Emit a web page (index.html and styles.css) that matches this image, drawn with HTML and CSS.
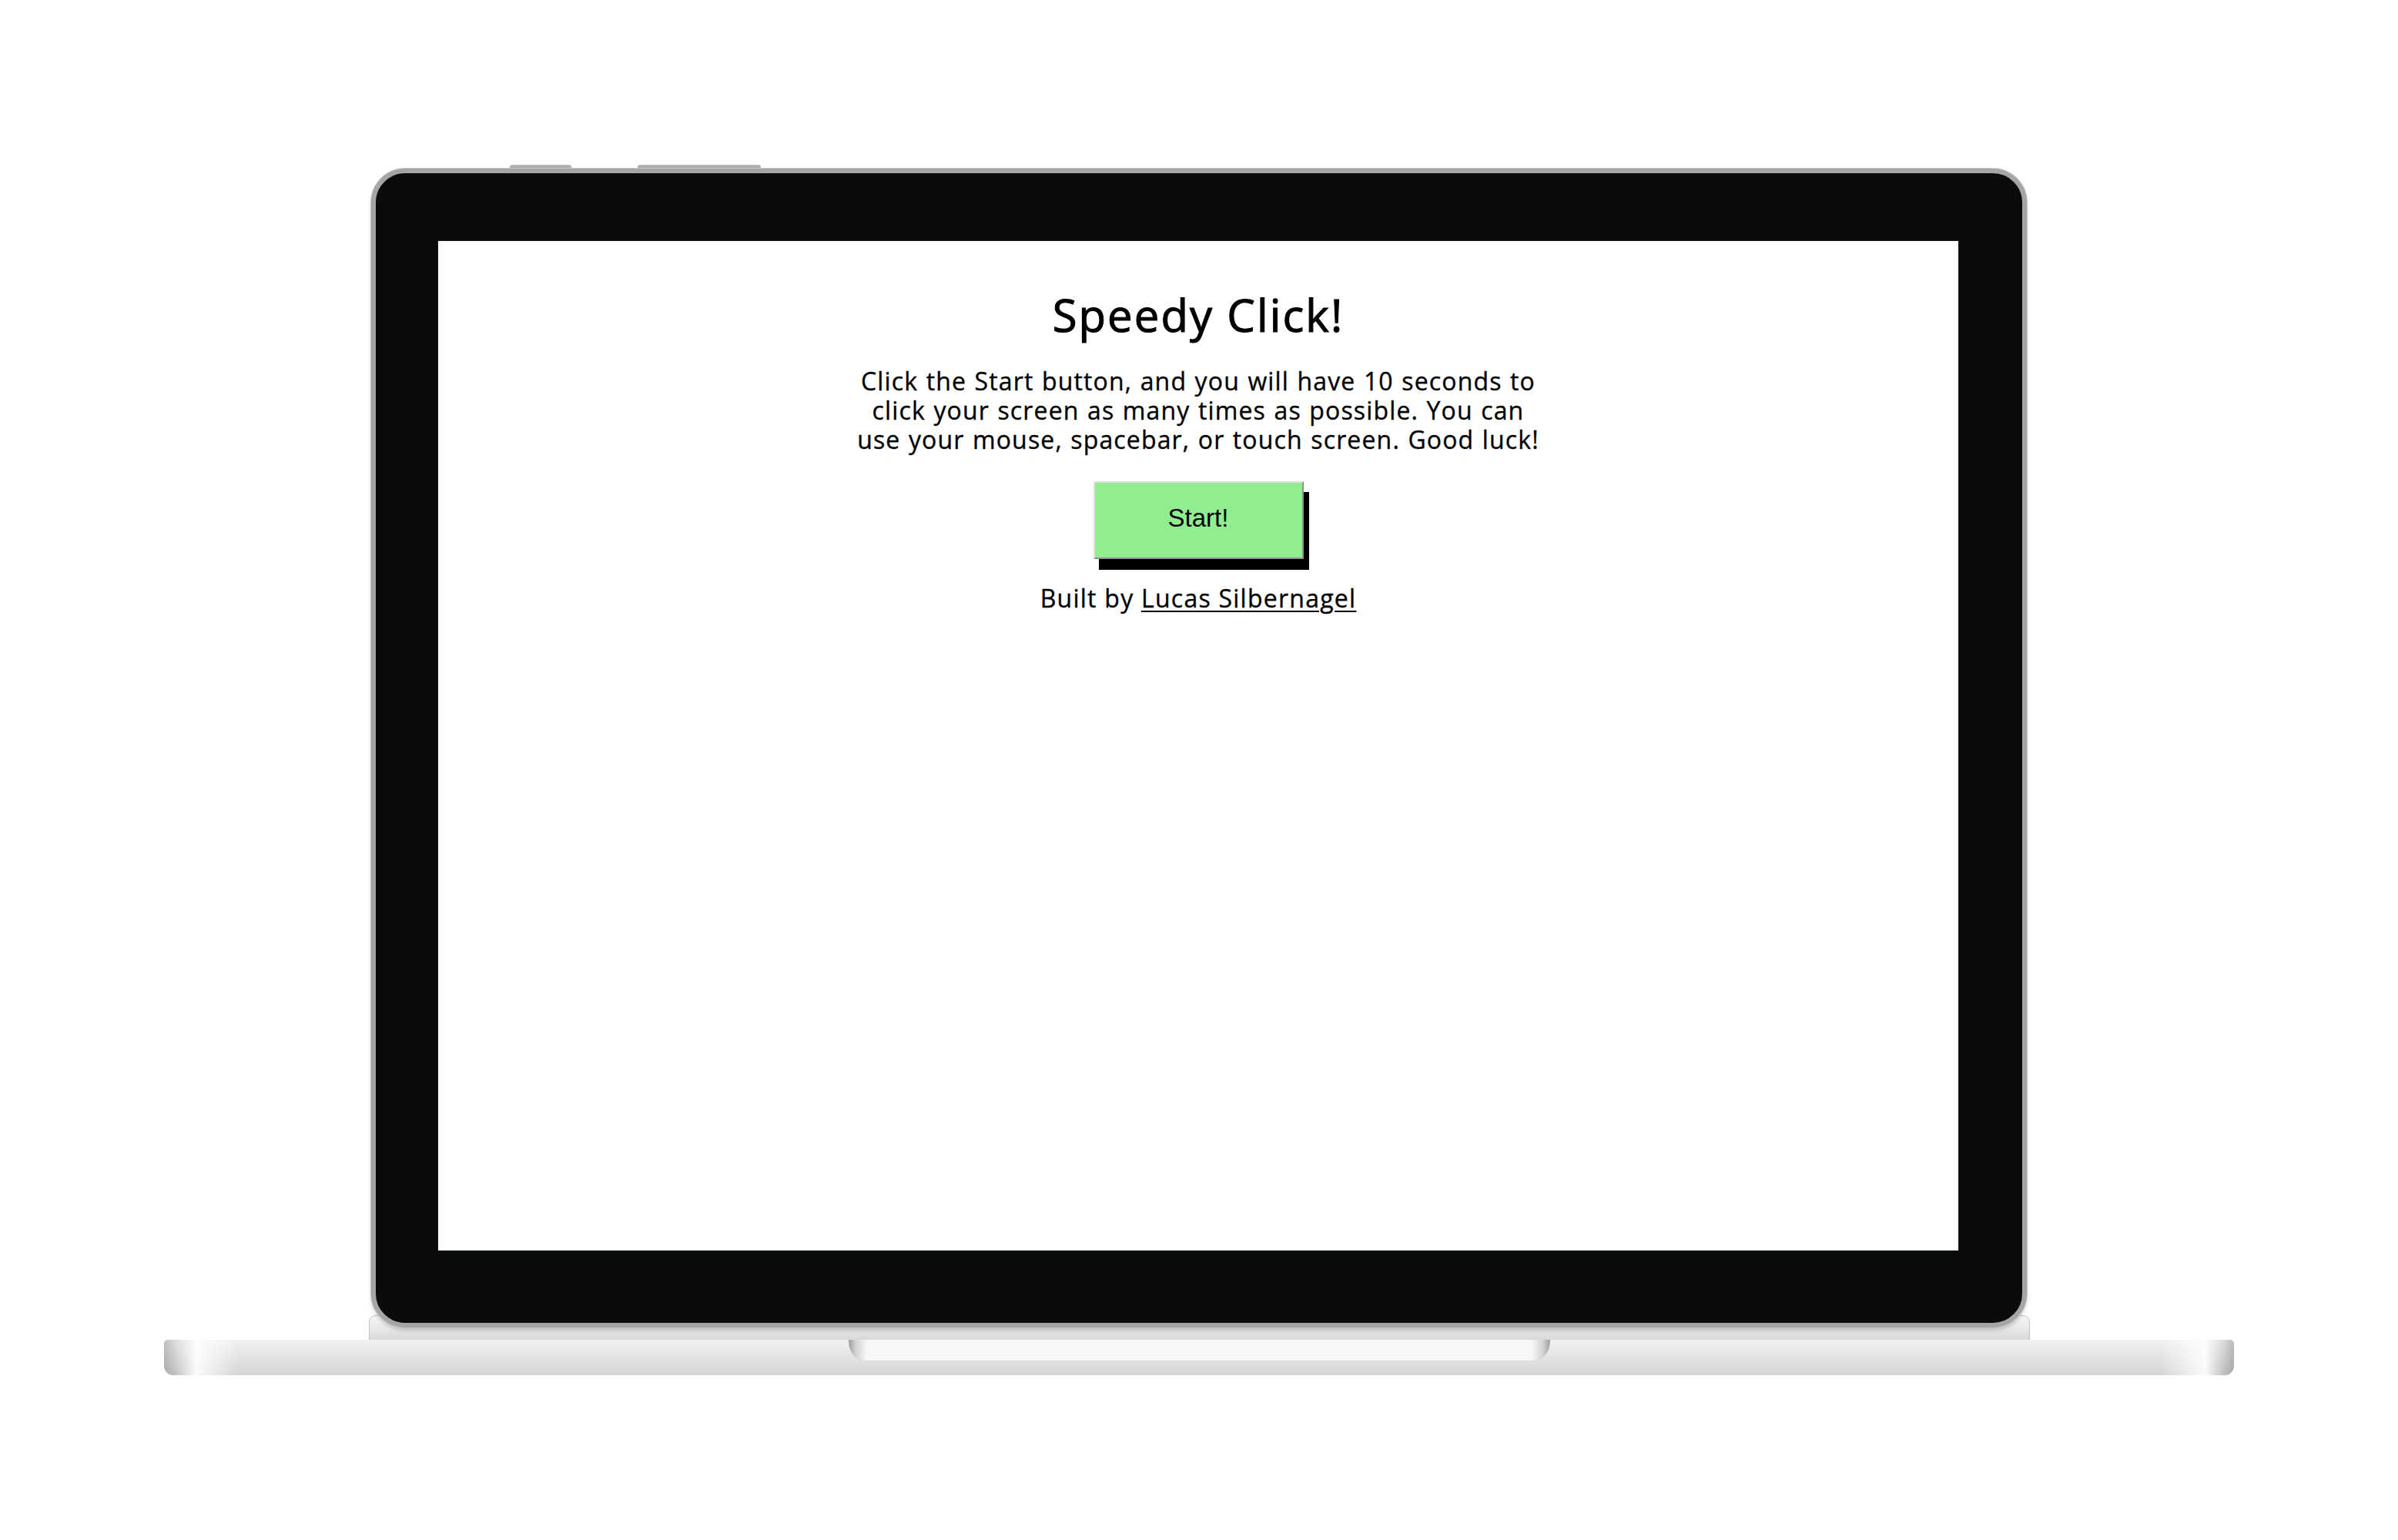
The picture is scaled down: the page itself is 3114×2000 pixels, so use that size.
FILE: index.html
```html
<!DOCTYPE html>
<html lang="en">
<head>
<meta charset="utf-8">
<title>Speedy Click!</title>
<link rel="stylesheet" href="styles.css">
</head>
<body>
<div class="scene">
  <div class="laptop">
    <div class="lid">
      <div class="lid-buttons">
        <span class="lid-btn lid-btn-a"></span>
        <span class="lid-btn lid-btn-b"></span>
      </div>
      <div class="bezel">
        <main class="screen">
          <h1 class="title">Speedy Click!</h1>
          <p class="intro">Click the Start button, and you will have 10 seconds to<br>click your screen as many times as possible. You can<br>use your mouse, spacebar, or touch screen. Good luck!</p>
          <button class="start-btn" type="button">Start!</button>
          <p class="credit">Built by <a class="credit-link" href="#">Lucas Silbernagel</a></p>
        </main>
      </div>
    </div>
    <div class="hinge"></div>
    <div class="base">
      <div class="trackpad-notch"></div>
    </div>
  </div>
</div>
</body>
</html>
```

FILE: styles.css
```css
html, body {
  margin: 0;
  padding: 0;
}

body {
  width: 3114px;
  height: 2000px;
  background: #ffffff;
  overflow: hidden;
  font-family: "Open Sans", "Liberation Sans", sans-serif;
  color: #000;
}

.scene {
  display: flex;
  justify-content: center;
  padding-top: 214px;
}

.laptop {
  display: flex;
  flex-direction: column;
  align-items: center;
}

.lid {
  width: 2150px;
  display: flex;
  flex-direction: column;
}

.lid-buttons {
  height: 5px;
  display: flex;
  gap: 86px;
  padding-left: 180px;
}

.lid-btn {
  display: block;
  height: 5px;
  background: linear-gradient(#b9b9b9, #a3a3a3);
  border-radius: 3px 3px 0 0;
}

.lid-btn-a { width: 80px; }
.lid-btn-b { width: 160px; }

.bezel {
  position: relative;
  z-index: 2;
  box-sizing: border-box;
  width: 2150px;
  padding: 88px 82px 94px 81px;
  background: #0a0c0b;
  border: 6px solid #a5a5a5;
  border-radius: 44px;
  box-shadow: 0 0 0 1px #c6c6c6, 0 4px 5px rgba(0, 0, 0, 0.18);
}

.screen {
  width: 1974px;
  height: 1311px;
  background: #ffffff;
  box-shadow: 0 0 0 1px #141b20;
  display: flex;
  flex-direction: column;
  align-items: center;
  box-sizing: border-box;
  padding-top: 64px;
}

.title {
  margin: 0;
  font-size: 58px;
  line-height: 64px;
  font-weight: 400;
  letter-spacing: 2.1px;
  -webkit-text-stroke: 1.1px #000;
}

.intro {
  margin: 35px 0 0;
  font-size: 32px;
  line-height: 38px;
  font-weight: 400;
  letter-spacing: 1.15px;
  word-spacing: 1px;
  text-align: center;
  white-space: nowrap;
  -webkit-text-stroke: 0.35px #000;
}

.start-btn {
  margin-top: 35px;
  box-sizing: border-box;
  width: 273px;
  height: 101px;
  padding: 0 0 6px;
  display: flex;
  align-items: center;
  justify-content: center;
  background: #90ee90;
  border-style: solid;
  border-width: 2px;
  border-color: #e2e2e2 #8f8f8f #8f8f8f #e2e2e2;
  box-shadow: 7px 14px 0 #000;
  font-family: "Liberation Sans", Arial, sans-serif;
  font-size: 33px;
  color: #000;
  cursor: pointer;
}

.credit {
  margin: 32px 0 0;
  font-size: 32px;
  line-height: 38px;
  font-weight: 400;
  letter-spacing: 1.25px;
  white-space: nowrap;
  -webkit-text-stroke: 0.35px #000;
}

.credit-link {
  color: #000;
  text-decoration: underline;
  text-decoration-thickness: 2px;
  text-underline-offset: 4px;
}

.hinge {
  position: relative;
  z-index: 1;
  box-sizing: border-box;
  width: 2157px;
  height: 32px;
  margin-top: -16px;
  background: linear-gradient(#f6f6f6, #e9e9e9 50%, #d9d9d9);
  border: 1px solid #c4c4c4;
  border-bottom: 0;
  border-radius: 9px 9px 0 0;
}

.base {
  width: 2688px;
  height: 46px;
  display: flex;
  justify-content: center;
  border-radius: 5px 5px 12px 12px;
  background:
    linear-gradient(to right,
      rgba(0, 0, 0, 0.2) 0,
      rgba(0, 0, 0, 0.07) 0.6%,
      rgba(255, 255, 255, 0.9) 1.55%,
      rgba(255, 255, 255, 0) 3.6%,
      rgba(255, 255, 255, 0) 96.4%,
      rgba(255, 255, 255, 0.9) 98.6%,
      rgba(0, 0, 0, 0.07) 99.4%,
      rgba(0, 0, 0, 0.22) 100%),
    linear-gradient(#f1f1f1, #e6e6e6 40%, #d4d4d4);
}

.trackpad-notch {
  width: 911px;
  height: 28px;
  border-radius: 0 0 22px 22px / 0 0 26px 26px;
  background:
    linear-gradient(to right,
      #9c9c9c 0,
      #d2d2d2 1%,
      #f7f7f7 2.6%,
      #f7f7f7 97.4%,
      #d2d2d2 99%,
      #9c9c9c 100%);
  box-shadow: inset 0 -1px 0 #dcdcdc;
}
```
